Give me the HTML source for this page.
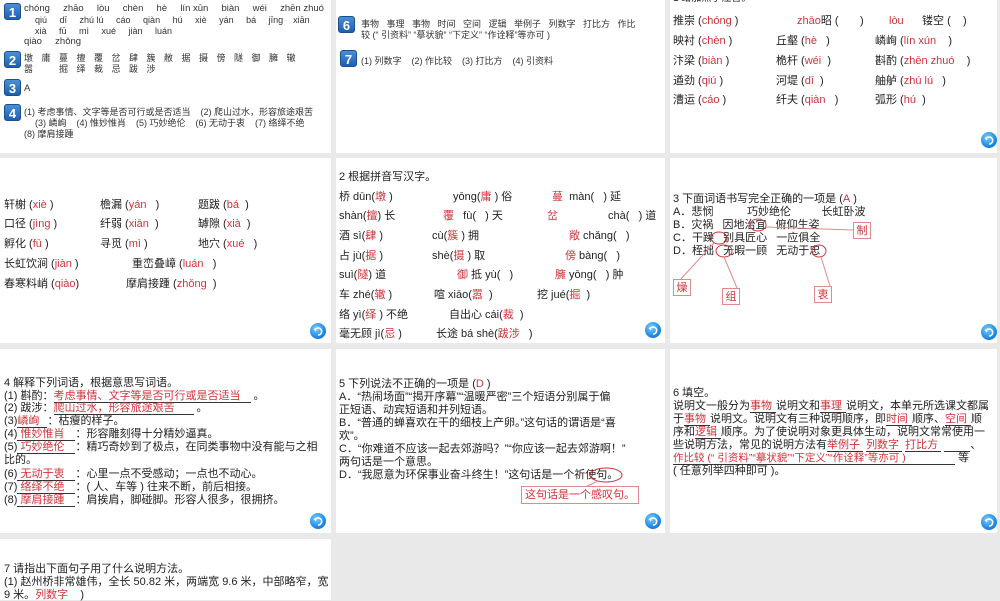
<!DOCTYPE html>
<html><head><meta charset="utf-8">
<style>
*{margin:0;padding:0;box-sizing:border-box}
body{width:1000px;height:600px;background:#e9e9e9;position:relative;overflow:hidden;font-family:"Liberation Sans","Noto Sans CJK SC",sans-serif;color:#222}
.p{position:absolute;background:#fff}
.t{position:absolute;white-space:nowrap;font-size:11px;line-height:12px}
.s{font-size:9.5px;color:#333}
.r{color:#d0343a}
.b{position:absolute;width:17px;height:17px;border-radius:3px;background:linear-gradient(#4b8fd6,#1f5fae);color:#fff;font-weight:bold;font-size:13px;line-height:17px;text-align:center;border:1px solid #1a4f92}
.btn{position:absolute;width:16px;height:16px;border-radius:50%;background:radial-gradient(circle at 40% 35%,#7fd0ff,#1e88e5 60%,#1565c0)}
.btn svg{position:absolute;left:3px;top:3px}
.u{border-bottom:1px solid #333;display:inline-block}
.box{position:absolute;border:1px solid #e08a8a;color:#d0343a;font-size:11px;text-align:center;line-height:16px;background:#fff}
</style></head><body>

<div class="p" style="left:0;top:0;width:331px;height:153px"></div>
<div class="p" style="left:336px;top:0;width:329px;height:153px"></div>
<div class="p" style="left:670px;top:0;width:327px;height:153px"></div>
<div class="p" style="left:0;top:158px;width:331px;height:185px"></div>
<div class="p" style="left:336px;top:158px;width:329px;height:185px"></div>
<div class="p" style="left:670px;top:158px;width:327px;height:185px"></div>
<div class="p" style="left:0;top:349px;width:331px;height:184px"></div>
<div class="p" style="left:336px;top:349px;width:329px;height:184px"></div>
<div class="p" style="left:670px;top:349px;width:327px;height:184px"></div>
<div class="p" style="left:0;top:539px;width:331px;height:61px"></div>

<!-- panel 1 -->
<div class="b" style="left:4px;top:3px">1</div>
<div class="t s" style="left:24px;top:3px">chóng&nbsp;&nbsp;&nbsp;&nbsp;&nbsp;zhāo&nbsp;&nbsp;&nbsp;&nbsp;&nbsp;lòu&nbsp;&nbsp;&nbsp;&nbsp;&nbsp;chèn&nbsp;&nbsp;&nbsp;&nbsp;&nbsp;hè&nbsp;&nbsp;&nbsp;&nbsp;&nbsp;lín xūn&nbsp;&nbsp;&nbsp;&nbsp;&nbsp;biàn&nbsp;&nbsp;&nbsp;&nbsp;&nbsp;wéi&nbsp;&nbsp;&nbsp;&nbsp;&nbsp;zhēn zhuó</div>
<div class="t s" style="left:35px;top:14px;font-size:9px">qiú&nbsp;&nbsp;&nbsp;&nbsp;&nbsp;dī&nbsp;&nbsp;&nbsp;&nbsp;&nbsp;zhú lú&nbsp;&nbsp;&nbsp;&nbsp;&nbsp;cáo&nbsp;&nbsp;&nbsp;&nbsp;&nbsp;qiàn&nbsp;&nbsp;&nbsp;&nbsp;&nbsp;hú&nbsp;&nbsp;&nbsp;&nbsp;&nbsp;xiè&nbsp;&nbsp;&nbsp;&nbsp;&nbsp;yán&nbsp;&nbsp;&nbsp;&nbsp;&nbsp;bá&nbsp;&nbsp;&nbsp;&nbsp;&nbsp;jīng&nbsp;&nbsp;&nbsp;&nbsp;xiān</div>
<div class="t s" style="left:35px;top:25px;font-size:9px">xià&nbsp;&nbsp;&nbsp;&nbsp;&nbsp;fū&nbsp;&nbsp;&nbsp;&nbsp;&nbsp;mì&nbsp;&nbsp;&nbsp;&nbsp;&nbsp;xué&nbsp;&nbsp;&nbsp;&nbsp;&nbsp;jiàn&nbsp;&nbsp;&nbsp;&nbsp;&nbsp;luán</div>
<div class="t s" style="left:24px;top:36px">qiào&nbsp;&nbsp;&nbsp;&nbsp;&nbsp;zhǒng</div>
<div class="b" style="left:4px;top:51px">2</div>
<div class="t s" style="left:24px;top:52px;letter-spacing:8.5px;font-size:9px">墩庸蔓擅覆岔肆簇敝据摄傍隧御臃辙</div>
<div class="t s" style="left:24px;top:63px;letter-spacing:8.5px;font-size:9px">嚣　掘绎裁忌跋涉</div>
<div class="b" style="left:4px;top:79px">3</div>
<div class="t s" style="left:24px;top:83px">A</div>
<div class="b" style="left:4px;top:104px">4</div>
<div class="t s" style="left:24px;top:106px;font-size:9px">(1) 考虑事情、文字等是否可行或是否适当&nbsp;&nbsp;&nbsp;&nbsp;(2) 爬山过水，形容旅途艰苦</div>
<div class="t s" style="left:35px;top:117px;font-size:9px">(3) 嶙峋&nbsp;&nbsp;&nbsp;&nbsp;(4) 惟妙惟肖&nbsp;&nbsp;&nbsp;&nbsp;(5) 巧妙绝伦&nbsp;&nbsp;&nbsp;&nbsp;(6) 无动于衷&nbsp;&nbsp;&nbsp;&nbsp;(7) 络绎不绝</div>
<div class="t s" style="left:24px;top:128px;font-size:9px">(8) 摩肩接踵</div>

<!-- panel 2 -->
<div class="b" style="left:338px;top:16px">6</div>
<div class="t s" style="left:361px;top:18px;font-size:9px">事物&nbsp;&nbsp;&nbsp;事理&nbsp;&nbsp;&nbsp;事物&nbsp;&nbsp;&nbsp;时间&nbsp;&nbsp;&nbsp;空间&nbsp;&nbsp;&nbsp;逻辑&nbsp;&nbsp;&nbsp;举例子&nbsp;&nbsp;&nbsp;列数字&nbsp;&nbsp;&nbsp;打比方&nbsp;&nbsp;&nbsp;作比</div>
<div class="t s" style="left:361px;top:29px;font-size:9px">较 (“ 引资料”&nbsp;“摹状貌”&nbsp;“下定义”&nbsp;“作诠释”等亦可 )</div>
<div class="b" style="left:340px;top:50px">7</div>
<div class="t s" style="left:361px;top:55px;font-size:9px">(1) 列数字&nbsp;&nbsp;&nbsp;&nbsp;(2) 作比较&nbsp;&nbsp;&nbsp;&nbsp;(3) 打比方&nbsp;&nbsp;&nbsp;&nbsp;(4) 引资料</div>

<!-- panel 3 -->
<div class="t" style="left:673px;top:-7px;font-size:10px">1 给加点字注音。</div>
<div class="t" style="left:673px;top:15px">推崇 (<span class="r">chóng</span> )</div>
<div class="t" style="left:797px;top:15px"><span class="r">zhāo</span>昭 (&nbsp;&nbsp;&nbsp;&nbsp;&nbsp;&nbsp;&nbsp;)</div>
<div class="t" style="left:889px;top:15px"><span class="r">lòu</span>&nbsp;&nbsp;&nbsp;&nbsp;&nbsp;&nbsp;镂空 (&nbsp;&nbsp;&nbsp;&nbsp;)</div>
<div class="t" style="left:673px;top:35px">映衬 (<span class="r">chèn</span> )</div>
<div class="t" style="left:776px;top:35px">丘壑 (<span class="r">hè</span>&nbsp;&nbsp;&nbsp;)</div>
<div class="t" style="left:875px;top:35px">嶙峋 (<span class="r">lín xún</span>&nbsp;&nbsp;&nbsp;&nbsp;)</div>
<div class="t" style="left:673px;top:55px">汴梁 (<span class="r">biàn</span> )</div>
<div class="t" style="left:776px;top:55px">桅杆 (<span class="r">wéi</span>&nbsp;&nbsp;)</div>
<div class="t" style="left:875px;top:55px">斟酌 (<span class="r">zhēn zhuó</span>&nbsp;&nbsp;&nbsp;&nbsp;)</div>
<div class="t" style="left:673px;top:75px">遒劲 (<span class="r">qiú</span> )</div>
<div class="t" style="left:776px;top:75px">河堤 (<span class="r">dī</span>&nbsp;&nbsp;)</div>
<div class="t" style="left:875px;top:75px">舳舻 (<span class="r">zhú lú</span>&nbsp;&nbsp;&nbsp;)</div>
<div class="t" style="left:673px;top:94px">漕运 (<span class="r">cáo</span> )</div>
<div class="t" style="left:776px;top:94px">纤夫 (<span class="r">qiàn</span>&nbsp;&nbsp;&nbsp;)</div>
<div class="t" style="left:875px;top:94px">弧形 (<span class="r">hú</span>&nbsp;&nbsp;)</div>
<div class="btn" style="left:981px;top:132px"><svg width="10" height="10" viewBox="0 0 10 10"><path d="M2 4 A3.5 3.5 0 1 1 5 9" fill="none" stroke="#fff" stroke-width="1.6"/><path d="M0.5 3 L3.5 2 L3 5.5z" fill="#fff"/></svg></div>

<!-- panel 4 -->
<div class="t" style="left:4px;top:199px">轩榭 (<span class="r">xiè</span> )</div>
<div class="t" style="left:100px;top:199px">檐漏 (<span class="r">yán</span>&nbsp;&nbsp;&nbsp;)</div>
<div class="t" style="left:198px;top:199px">题跋 (<span class="r">bá</span>&nbsp;&nbsp;)</div>
<div class="t" style="left:4px;top:218px">口径 (<span class="r">jìng</span> )</div>
<div class="t" style="left:100px;top:218px">纤弱 (<span class="r">xiān</span>&nbsp;&nbsp;)</div>
<div class="t" style="left:198px;top:218px">罅隙 (<span class="r">xià</span>&nbsp;&nbsp;)</div>
<div class="t" style="left:4px;top:238px">孵化 (<span class="r">fū</span> )</div>
<div class="t" style="left:100px;top:238px">寻觅 (<span class="r">mì</span> )</div>
<div class="t" style="left:198px;top:238px">地穴 (<span class="r">xué</span>&nbsp;&nbsp;&nbsp;)</div>
<div class="t" style="left:4px;top:258px">长虹饮涧 (<span class="r">jiàn</span> )</div>
<div class="t" style="left:132px;top:258px">重峦叠嶂 (<span class="r">luán</span>&nbsp;&nbsp;&nbsp;)</div>
<div class="t" style="left:4px;top:278px">春寒料峭 (<span class="r">qiào</span>)</div>
<div class="t" style="left:126px;top:278px">摩肩接踵 (<span class="r">zhǒng</span>&nbsp;&nbsp;)</div>
<div class="btn" style="left:310px;top:323px"><svg width="10" height="10" viewBox="0 0 10 10"><path d="M2 4 A3.5 3.5 0 1 1 5 9" fill="none" stroke="#fff" stroke-width="1.6"/><path d="M0.5 3 L3.5 2 L3 5.5z" fill="#fff"/></svg></div>

<!-- panel 5 -->
<div class="t" style="left:339px;top:171px">2 根据拼音写汉字。</div>
<div class="t" style="left:339px;top:191px">桥 dūn(<span class="r">墩</span> )</div>
<div class="t" style="left:453px;top:191px">yōng(<span class="r">庸</span> ) 俗</div>
<div class="t" style="left:552px;top:191px"><span class="r">蔓</span>&nbsp;&nbsp;màn(&nbsp;&nbsp;&nbsp;) 延</div>
<div class="t" style="left:339px;top:210px">shàn(<span class="r">擅</span>) 长</div>
<div class="t" style="left:443px;top:210px"><span class="r">覆</span>&nbsp;&nbsp;&nbsp;fù(&nbsp;&nbsp;&nbsp;) 天</div>
<div class="t" style="left:547px;top:210px"><span class="r">岔</span></div>
<div class="t" style="left:608px;top:210px">chà(&nbsp;&nbsp;&nbsp;) 道</div>
<div class="t" style="left:339px;top:230px">酒 sì(<span class="r">肆</span> )</div>
<div class="t" style="left:432px;top:230px">cù(<span class="r">簇</span> ) 拥</div>
<div class="t" style="left:569px;top:230px"><span class="r">敞</span> chǎng(&nbsp;&nbsp;&nbsp;)</div>
<div class="t" style="left:339px;top:250px">占 jù(<span class="r">据</span> )</div>
<div class="t" style="left:432px;top:250px">shè(<span class="r">摄</span> ) 取</div>
<div class="t" style="left:565px;top:250px"><span class="r">傍</span> bàng(&nbsp;&nbsp;&nbsp;)</div>
<div class="t" style="left:339px;top:269px">suì(<span class="r">隧</span>) 道</div>
<div class="t" style="left:457px;top:269px"><span class="r">御</span> 抵 yù(&nbsp;&nbsp;&nbsp;)</div>
<div class="t" style="left:555px;top:269px"><span class="r">臃</span> yōng(&nbsp;&nbsp;&nbsp;) 肿</div>
<div class="t" style="left:339px;top:289px">车 zhé(<span class="r">辙</span> )</div>
<div class="t" style="left:434px;top:289px">喧 xiāo(<span class="r">嚣</span>&nbsp;&nbsp;)</div>
<div class="t" style="left:537px;top:289px">挖 jué(<span class="r">掘</span>&nbsp;&nbsp;)</div>
<div class="t" style="left:339px;top:309px">络 yì(<span class="r">绎</span> ) 不绝</div>
<div class="t" style="left:449px;top:309px">自出心 cái(<span class="r">裁</span>&nbsp;&nbsp;)</div>
<div class="t" style="left:339px;top:328px">毫无顾 jì(<span class="r">忌</span> )</div>
<div class="t" style="left:436px;top:328px">长途 bá shè(<span class="r">跋涉</span>&nbsp;&nbsp;&nbsp;)</div>
<div class="btn" style="left:645px;top:322px"><svg width="10" height="10" viewBox="0 0 10 10"><path d="M2 4 A3.5 3.5 0 1 1 5 9" fill="none" stroke="#fff" stroke-width="1.6"/><path d="M0.5 3 L3.5 2 L3 5.5z" fill="#fff"/></svg></div>

<!-- panel 6 -->
<div class="t" style="left:673px;top:193px">3 下面词语书写完全正确的一项是 (<span class="r">A</span>&nbsp;)</div>
<div class="t" style="left:673px;top:206px">A．悲悯&nbsp;&nbsp;&nbsp;&nbsp;&nbsp;&nbsp;&nbsp;&nbsp;&nbsp;&nbsp;&nbsp;巧妙绝伦&nbsp;&nbsp;&nbsp;&nbsp;&nbsp;&nbsp;&nbsp;&nbsp;&nbsp;&nbsp;长虹卧波</div>
<div class="t" style="left:673px;top:219px">B．灾祸&nbsp;&nbsp;&nbsp;因地治宜&nbsp;&nbsp;&nbsp;俯仰生姿</div>
<div class="t" style="left:673px;top:232px">C．干躁&nbsp;&nbsp;&nbsp;别具匠心&nbsp;&nbsp;&nbsp;一应俱全</div>
<div class="t" style="left:673px;top:245px">D．桎拙&nbsp;&nbsp;&nbsp;无暇一顾&nbsp;&nbsp;&nbsp;无动于忠</div>
<svg style="position:absolute;left:670px;top:158px" width="330" height="185">
<g fill="none" stroke="#d0343a" stroke-width="1">
<ellipse cx="88" cy="67" rx="8" ry="6"/>
<ellipse cx="49" cy="80" rx="8" ry="6"/>
<ellipse cx="54" cy="93" rx="8" ry="6"/>
<ellipse cx="149" cy="93" rx="7" ry="6"/>
</g>
<g stroke="#e08a8a" stroke-width="1">
<line x1="96" y1="69" x2="183" y2="72"/>
<line x1="44" y1="85" x2="10" y2="122"/>
<line x1="54" y1="99" x2="67" y2="130"/>
<line x1="151" y1="99" x2="160" y2="128"/>
</g>
</svg>
<div class="box" style="left:853px;top:222px;width:18px;height:17px">制</div>
<div class="box" style="left:673px;top:279px;width:18px;height:17px">燥</div>
<div class="box" style="left:722px;top:288px;width:18px;height:17px">组</div>
<div class="box" style="left:814px;top:286px;width:18px;height:17px">衷</div>
<div class="btn" style="left:981px;top:324px"><svg width="10" height="10" viewBox="0 0 10 10"><path d="M2 4 A3.5 3.5 0 1 1 5 9" fill="none" stroke="#fff" stroke-width="1.6"/><path d="M0.5 3 L3.5 2 L3 5.5z" fill="#fff"/></svg></div>

<!-- panel 7 -->
<div class="t" style="left:4px;top:377px">4 解释下列词语，根据意思写词语。</div>
<div class="t" style="left:4px;top:390px">(1) 斟酌：<span class="u r" style="width:197px">考虑事情、文字等是否可行或是否适当</span> 。</div>
<div class="t" style="left:4px;top:402px">(2) 跋涉：<span class="u r" style="width:140px">爬山过水，形容旅途艰苦</span> 。</div>
<div class="t" style="left:4px;top:415px">(3)<span class="u r" style="width:30px">嶙峋</span>：枯瘦的样子。</div>
<div class="t" style="left:4px;top:428px">(4)<span class="u r" style="width:58px">&nbsp;惟妙惟肖</span>：形容雕刻得十分精妙逼真。</div>
<div class="t" style="left:4px;top:441px">(5)<span class="u r" style="width:58px">&nbsp;巧妙绝伦</span>：精巧奇妙到了极点，在同类事物中没有能与之相</div>
<div class="t" style="left:4px;top:454px">比的。</div>
<div class="t" style="left:4px;top:468px">(6)<span class="u r" style="width:58px">&nbsp;无动于衷</span>：心里一点不受感动；一点也不动心。</div>
<div class="t" style="left:4px;top:481px">(7)<span class="u r" style="width:58px">&nbsp;络绎不绝</span>：( 人、车等 ) 往来不断，前后相接。</div>
<div class="t" style="left:4px;top:494px">(8)<span class="u r" style="width:58px">&nbsp;摩肩接踵</span>：肩挨肩，脚碰脚。形容人很多，很拥挤。</div>
<div class="btn" style="left:310px;top:513px"><svg width="10" height="10" viewBox="0 0 10 10"><path d="M2 4 A3.5 3.5 0 1 1 5 9" fill="none" stroke="#fff" stroke-width="1.6"/><path d="M0.5 3 L3.5 2 L3 5.5z" fill="#fff"/></svg></div>

<!-- panel 8 -->
<div class="t" style="left:339px;top:378px">5 下列说法不正确的一项是 (<span class="r">D</span>&nbsp;)</div>
<div class="t" style="left:339px;top:391px">A．“热闹场面”“揭开序幕”“温暖严密”三个短语分别属于偏</div>
<div class="t" style="left:339px;top:404px">正短语、动宾短语和并列短语。</div>
<div class="t" style="left:339px;top:417px">B．“普通的蝉喜欢在干的细枝上产卵。”这句话的谓语是“喜</div>
<div class="t" style="left:339px;top:430px">欢”。</div>
<div class="t" style="left:339px;top:443px">C．“你难道不应该一起去郊游吗？”“你应该一起去郊游啊！”</div>
<div class="t" style="left:339px;top:456px">两句话是一个意思。</div>
<div class="t" style="left:339px;top:469px">D．“我愿意为环保事业奋斗终生！”这句话是一个祈使句。</div>
<svg style="position:absolute;left:336px;top:349px" width="330" height="184">
<ellipse cx="270" cy="126" rx="16" ry="7" fill="none" stroke="#d0343a"/>
<line x1="262" y1="132" x2="245" y2="140" stroke="#e08a8a"/>
</svg>
<div class="box" style="left:521px;top:486px;width:118px;height:18px;font-size:11px">这句话是一个感叹句。</div>
<div class="btn" style="left:645px;top:513px"><svg width="10" height="10" viewBox="0 0 10 10"><path d="M2 4 A3.5 3.5 0 1 1 5 9" fill="none" stroke="#fff" stroke-width="1.6"/><path d="M0.5 3 L3.5 2 L3 5.5z" fill="#fff"/></svg></div>

<!-- panel 9 -->
<div class="t" style="left:673px;top:387px">6 填空。</div>
<div class="t" style="left:673px;top:400px">说明文一般分为<span class="u r" style="width:26px">事物</span>说明文和<span class="u r" style="width:26px">事理</span>说明文，本单元所选课文都属</div>
<div class="t" style="left:673px;top:413px">于<span class="u r" style="width:26px">事物</span>说明文。说明文有三种说明顺序，即<span class="u r" style="width:26px">时间</span>顺序、<span class="u r" style="width:26px">空间</span>顺</div>
<div class="t" style="left:673px;top:426px">序和<span class="u r" style="width:26px">逻辑</span>顺序。为了使说明对象更具体生动，说明文常常使用一</div>
<div class="t" style="left:673px;top:439px">些说明方法，常见的说明方法有<span class="u r" style="width:36px">举例子</span>&nbsp;<span class="u r" style="width:36px">列数字</span>&nbsp;<span class="u r" style="width:36px">打比方</span>&nbsp;<span class="u" style="width:26px">&nbsp;</span>、</div>
<div class="t" style="left:673px;top:452px"><span class="u r" style="width:282px;font-size:10.5px">作比较 (“ 引资料”“摹状貌”“下定义”“作诠释”等亦可 )</span> 等</div>
<div class="t" style="left:673px;top:465px">( 任意列举四种即可 )。</div>
<div class="btn" style="left:981px;top:514px"><svg width="10" height="10" viewBox="0 0 10 10"><path d="M2 4 A3.5 3.5 0 1 1 5 9" fill="none" stroke="#fff" stroke-width="1.6"/><path d="M0.5 3 L3.5 2 L3 5.5z" fill="#fff"/></svg></div>

<!-- panel 10 -->
<div class="t" style="left:4px;top:563px">7 请指出下面句子用了什么说明方法。</div>
<div class="t" style="left:4px;top:576px">(1) 赵州桥非常雄伟，全长 50.82 米，两端宽 9.6 米，中部略窄，宽</div>
<div class="t" style="left:4px;top:589px">9 米。<span class="r">列数字</span>&nbsp;&nbsp;&nbsp;&nbsp;)</div>

</body></html>
